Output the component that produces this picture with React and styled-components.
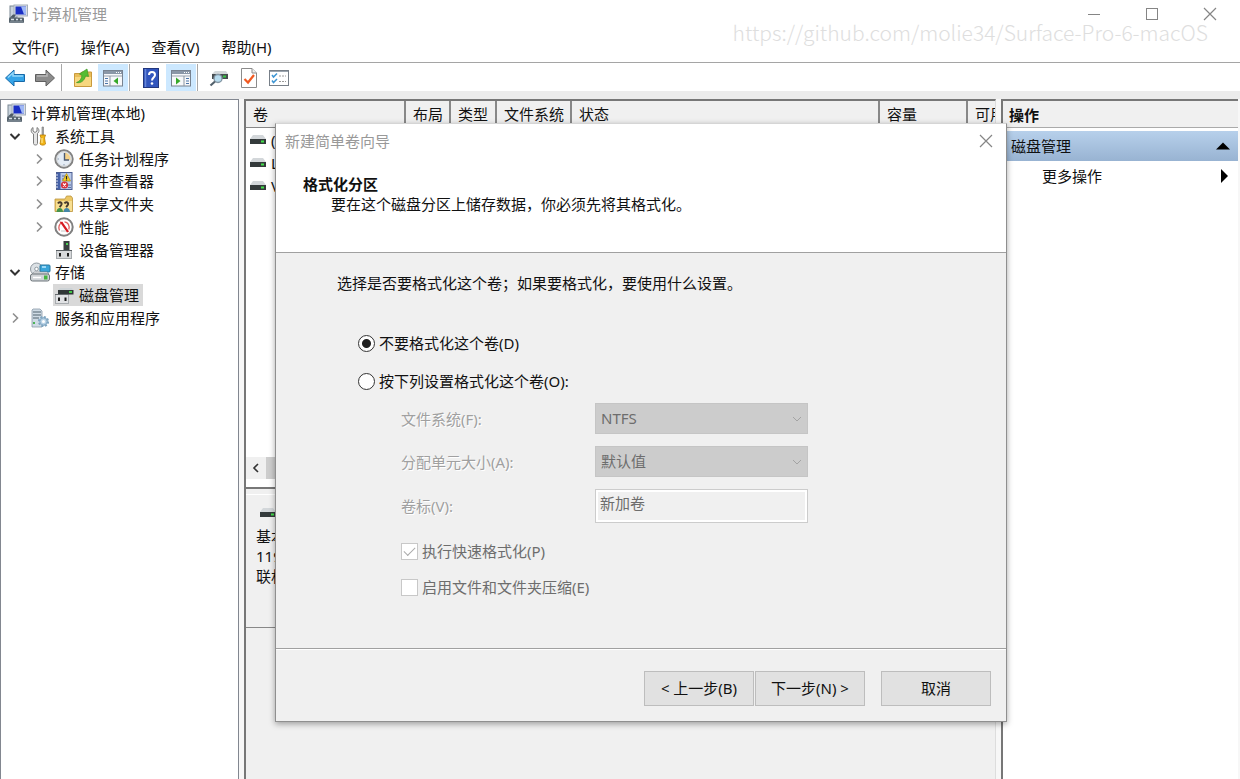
import { useState } from 'react';
import styled, { createGlobalStyle, css } from 'styled-components';

const GlobalStyle = createGlobalStyle`
    * {
        box-sizing: border-box;
    }

    body {
        margin: 0;
        overflow: hidden;
    }

    body, button, input, select {
        font-family: "Noto Sans", "Noto Sans CJK SC", sans-serif;
        font-size: 15px;
        line-height: 20px;
        color: #111;
    }
`;

/* ---------- Iconos ---------- */

const ComputerIcon = () => (
    <svg width="20" height="20" viewBox="0 0 20 20">
        <rect x="2" y="2" width="7" height="12" fill="#c9d3dc" stroke="#7b8894" />
        <rect x="6" y="1" width="13.5" height="11" fill="#d9dee6" stroke="#a3adba" />
        <rect x="7.500" y="2.500" width="10.500" height="8" fill="#1a2fc4" />
        <path d="M13 2.500H18V10.500H16Z" fill="#9fb8f5" />
        <path d="M2 13.500L5 10.500H8L6 14Z" fill="#4d5a66" />
        <rect x="1" y="13.500" width="15" height="5.500" rx="1" fill="#56636d" />
        <path d="M3 15.500H6M8 15.500H10M12 15.500H14" stroke="#d7e0e6" strokeWidth="1.500" />
        <path d="M2 18H15" stroke="#93a0aa" />
    </svg>
);

const ToolsIcon = () => (
    <svg width="20" height="20" viewBox="0 0 20 20">
        <path d="M3 1.500V5L5 6.500L7 5V1.500C9.500 3 9.500 6 7.500 7.500V17.500C7.500 19.500 3.500 19.500 3.500 17.500V8C.500 6.500 .500 3 3 1.500Z" fill="#e6e6e6" stroke="#7c7c7c" />
        <path d="M12 1H13.500V9H12Z" fill="#aaa" stroke="#777" strokeWidth=".600" />
        <path d="M10 9H15.500L14.500 12L15.500 18C14.500 19.500 11 19.500 10 18L11 12Z" fill="#f3b617" stroke="#b97d08" strokeWidth=".800" />
        <path d="M12 12V17" stroke="#fff1a8" />
    </svg>
);

const ClockIcon = () => (
    <svg width="20" height="20" viewBox="0 0 20 20">
        <circle cx="10" cy="10" r="8.700" fill="#e4ecf5" stroke="#828282" strokeWidth="2" />
        <circle cx="10" cy="10" r="7.200" fill="none" stroke="#d6d6d6" />
        <path d="M10.500 3.500A6.500 6.500 0 0 1 16.500 11H10.500Z" fill="#f4d28b" />
        <path d="M10.500 4V11H15" fill="none" stroke="#4c5a73" strokeWidth="1.400" />
        <path d="M3.500 10H5M10 15V16.500" stroke="#8f9db1" />
    </svg>
);

const EventIcon = () => (
    <svg width="20" height="20" viewBox="0 0 20 20">
        <rect x="2.500" y="1.500" width="15.500" height="17" fill="#b8c8e8" stroke="#4b5d91" />
        <rect x="3" y="2" width="3.500" height="16" fill="#4561a8" />
        <path d="M1.500 4H4M1.500 7H4M1.500 10H4M1.500 13H4M1.500 16H4" stroke="#dde4f2" strokeWidth="1.200" />
        <path d="M8 5H11M8 8H10M14 14H17M14 16.500H17" stroke="#5b6f9f" />
        <path d="M12.500 2.500L16.500 10H8.500Z" fill="#f7cf23" stroke="#b08c10" strokeWidth=".700" />
        <path d="M12.500 5V8M12.500 8.500V9.500" stroke="#222" strokeWidth="1.200" />
        <circle cx="10.500" cy="14" r="3.600" fill="#d8313b" />
        <path d="M9 12.500L12 15.500M12 12.500L9 15.500" stroke="#fff" strokeWidth="1.200" />
    </svg>
);

const SharedIcon = () => (
    <svg width="20" height="20" viewBox="0 0 20 20">
        <path d="M1 5H11L12.500 2H17L18.500 4V17.500H1Z" fill="#ecc765" stroke="#bd963e" strokeWidth=".800" />
        <path d="M2 7H18V17H2Z" fill="#f8df92" />
        <path d="M4 9.500C5 7.500 8 8 7.500 10.500C7 12 6 12.500 5.500 13" fill="none" stroke="#473a2c" strokeWidth="2" />
        <path d="M10.500 9.500C11.500 7.500 14.500 8 14 10.500C13.500 12 12.500 12.500 12 13" fill="none" stroke="#473a2c" strokeWidth="2" />
        <path d="M2.500 18C2.500 12.500 9 12.500 9 18Z" fill="#46934b" />
        <path d="M9.500 18C9.500 12.500 16 12.500 16 18Z" fill="#4386a8" />
    </svg>
);

const PerformanceIcon = () => (
    <svg width="20" height="20" viewBox="0 0 20 20">
        <circle cx="10" cy="10" r="8.700" fill="#fff" stroke="#808080" strokeWidth="2" />
        <path d="M5.500 13.500C4 10.500 5 6.500 8.500 5M10.500 4.800C14 5 16 9 14.800 12.500" fill="none" stroke="#e06060" strokeWidth="1.300" />
        <path d="M5.500 4.500L8.500 5L15 14.500L13 15.500Z" fill="#d71920" />
        <path d="M7 14H12" stroke="#c5c5c5" />
    </svg>
);

const DeviceIcon = () => (
    <svg width="20" height="20" viewBox="0 0 20 20">
        <rect x="9.500" y="1" width="6" height="10" fill="#393f3f" />
        <rect x="12" y="3" width="2" height="2" fill="#4ccf54" />
        <rect x="2.500" y="10.500" width="15" height="8" fill="#d7d9db" stroke="#a5a9ac" />
        <path d="M2 10.500H18" stroke="#595e62" />
        <rect x="5" y="13" width="2" height="3.500" fill="#1d1d1d" />
        <rect x="13" y="13" width="2" height="3.500" fill="#1d1d1d" />
    </svg>
);

const StorageIcon = () => (
    <svg width="22" height="20" viewBox="0 0 22 20">
        <circle cx="7.500" cy="7" r="6" fill="#dce1e5" stroke="#8f989f" />
        <circle cx="7.500" cy="7" r="1.800" fill="#fff" stroke="#929ca3" />
        <rect x="11" y="3" width="10" height="7" rx="1" fill="#3aa5d9" stroke="#27769f" />
        <path d="M13 5H17" stroke="#bdeaff" strokeWidth="1.500" />
        <path d="M3 12L5 10H18L20 12Z" fill="#eef0f1" stroke="#8d9499" strokeWidth=".700" />
        <rect x="1.500" y="12" width="19" height="7" rx="2" fill="#d0d4d7" stroke="#6d757a" />
        <rect x="15" y="13.500" width="3.500" height="4" fill="#44b43f" />
        <path d="M4 15.500H12" stroke="#fff" strokeWidth="1.500" />
    </svg>
);

const DiskToolIcon = () => (
    <svg width="20" height="20" viewBox="0 0 20 20">
        <path d="M4 5L6 3H18L19 5Z" fill="#cdd3d6" />
        <rect x="4" y="5" width="15.500" height="4.500" fill="#303636" />
        <rect x="15" y="6" width="3" height="2" fill="#43c948" />
        <rect x="1.500" y="9.500" width="13" height="9" fill="#e1e2e4" stroke="#a7abae" />
        <path d="M1 9.500H15" stroke="#656a6d" />
        <rect x="4" y="12.500" width="2" height="3.500" fill="#1d1d1d" />
        <rect x="10.500" y="12.500" width="2" height="3.500" fill="#1d1d1d" />
    </svg>
);

const ServicesIcon = () => (
    <svg width="20" height="20" viewBox="0 0 20 20">
        <path d="M3 1H10L12 3V19H2V2Z" fill="#cfdbe5" stroke="#8a9ba8" strokeWidth=".800" />
        <path d="M3 4H11M3 7H11M3 10H9" stroke="#51636f" strokeWidth="1.200" />
        <rect x="3" y="14" width="2" height="2" fill="#4cb456" />
        <circle cx="13.500" cy="13.500" r="4.500" fill="#aac6dc" stroke="#7fa5c0" strokeWidth="2.200" strokeDasharray="2 1.500" />
        <circle cx="13.500" cy="13.500" r="3.500" fill="#bad3e6" stroke="#7fa5c0" strokeWidth=".800" />
        <circle cx="13.500" cy="13.500" r="1.500" fill="#fff" />
    </svg>
);

const DriveIcon = () => (
    <svg width="18" height="12" viewBox="0 0 18 12">
        <path d="M1 5L4 1H14L17 5Z" fill="#d3d7da" />
        <rect x="1" y="5" width="16" height="5" fill="#343a3b" />
        <rect x="12" y="6.500" width="3" height="2" fill="#42e04a" />
    </svg>
);

const ArrowIcon = ({ forward }) => (
    <svg width="22" height="20" viewBox="0 0 22 20">
        {forward
            ? <path d="M20.500 10L12 2V6.500H1.500V13.500H12V18Z" fill="#8c8c8c" stroke="#5f5f5f" strokeLinejoin="round" />
            : <path d="M1.500 10L10 2V6.500H20.500V13.500H10V18Z" fill="#35a4e8" stroke="#1769a8" strokeLinejoin="round" />}
        <path d={forward ? 'M3 8H13V5' : 'M4 9.500L9 5V8H19'} fill="none" stroke={forward ? '#b8b8b8' : '#91d6fa'} strokeWidth="1.500" />
    </svg>
);

const FolderUpIcon = () => (
    <svg width="20" height="20" viewBox="0 0 20 20">
        <path d="M1.500 5.500H7L9 4H18.500V18.500H1.500Z" fill="#e9bd59" stroke="#c99a3d" />
        <path d="M2 9H18V18H2Z" fill="#f7d77f" />
        <path d="M3.500 14.500C7 13.500 8.500 10.500 9 7.500L6.500 6L14 1L15.500 8.500L12.500 8C11.500 12.500 8 15.500 3.500 14.500Z" fill="#57bd32" stroke="#3c9a25" strokeWidth=".700" />
    </svg>
);

const PaneIcon = ({ right }) => (
    <svg width="22" height="20" viewBox="0 0 22 20">
        <rect x="1.500" y="2.500" width="19" height="15.500" fill="#f7f8fa" stroke="#778290" />
        <rect x="2" y="3" width="18" height="3" fill="#8a97a7" />
        <path d="M14 4.500H15M16 4.500H17M18 4.500H19" stroke="#fff" />
        <path d="M2 8H20" stroke="#98a3b0" />
        {right ? (
            <>
                <path d="M14 8V18" stroke="#8b96a2" />
                <path d="M16 10.500H19M16 13H19M16 15.500H19" stroke="#4b75a9" strokeWidth="1.200" />
                <path d="M6 9.500L10.500 13L6 16.500Z" fill="#35a829" />
            </>
        ) : (
            <>
                <path d="M8 8V18" stroke="#8b96a2" />
                <path d="M3 10.500H6M3 13H6M3 15.500H6" stroke="#4b75a9" strokeWidth="1.200" />
                <path d="M16 9.500L11.500 13L16 16.500Z" fill="#35a829" />
            </>
        )}
    </svg>
);

const HelpIcon = () => (
    <svg width="18" height="22" viewBox="0 0 18 22">
        <rect x="1.500" y="1.500" width="15" height="19" fill="#3155bd" stroke="#22377e" />
        <path d="M3.500 2V20" stroke="#6886d7" strokeWidth="1.500" />
        <path d="M7 8C7 4 13 4 13 8C13 10.500 10 10.500 10 13.500" fill="none" stroke="#fff" strokeWidth="2" />
        <circle cx="10" cy="16.500" r="1.300" fill="#fff" />
    </svg>
);

const DiskSearchIcon = () => (
    <svg width="20" height="20" viewBox="0 0 20 20">
        <path d="M3 6L6 3H17L19 6Z" fill="#d3d8da" />
        <rect x="3" y="6" width="16" height="5" fill="#474d50" />
        <rect x="14" y="7.500" width="3" height="2" fill="#39c945" />
        <circle cx="9" cy="10.500" r="4" fill="#b7dcef" stroke="#8496a3" strokeWidth="1.400" />
        <path d="M6 13.500L1.500 17.500" stroke="#52616c" strokeWidth="2.200" />
    </svg>
);

const CheckDocIcon = () => (
    <svg width="18" height="22" viewBox="0 0 18 22">
        <path d="M1.500 1.500H12L16.500 6V20.500H1.500Z" fill="#fff" stroke="#8b8b8b" />
        <path d="M12 1.500V6H16.500" fill="#eee" stroke="#8b8b8b" />
        <path d="M4.500 12L8 15.500L14 8" fill="none" stroke="#f15a22" strokeWidth="2.200" />
    </svg>
);

const ChecklistIcon = () => (
    <svg width="22" height="18" viewBox="0 0 22 18">
        <rect x="1.500" y="1.500" width="19" height="15" fill="#fff" stroke="#777f88" />
        <path d="M2 2.500H20" stroke="#9ba5af" />
        <path d="M4 6L5.500 8L9 4.500M4 11.500L5.500 13.500L9 10" fill="none" stroke="#3d95d3" strokeWidth="1.500" />
        <path d="M11 7H13M14 7H16M17 7H18M11 12.500H13M14 12.500H16M17 12.500H18" stroke="#999" />
    </svg>
);

const CloseIcon = () => (
    <svg width="14" height="14" viewBox="0 0 14 14">
        <path d="M1 1L13 13M13 1L1 13" stroke="#858585" strokeWidth="1.200" />
    </svg>
);

const ChevronIcon = ({ open }) => (
    <svg width="12" height="12" viewBox="0 0 12 12">
        <path d={open ? 'M1.500 4L6 8.500L10.500 4' : 'M4 1.500L8.500 6L4 10.500'} fill="none" stroke={open ? '#333' : '#8f8f8f'} strokeWidth={open ? 2 : 1.600} />
    </svg>
);

const SelectArrow = () => (
    <svg width="10" height="6" viewBox="0 0 10 6">
        <path d="M1 1L5 5L9 1" fill="none" stroke="#a3a3a3" />
    </svg>
);

/* ---------- Datos ---------- */

const menus = ['文件(F)', '操作(A)', '查看(V)', '帮助(H)'];

const treeItems = [
    { id: 'root', name: '计算机管理(本地)', depth: 0, icon: <ComputerIcon /> },
    { id: 'tools', name: '系统工具', depth: 1, icon: <ToolsIcon />, expandable: true, open: true },
    { id: 'tasks', name: '任务计划程序', depth: 2, icon: <ClockIcon />, expandable: true },
    { id: 'events', name: '事件查看器', depth: 2, icon: <EventIcon />, expandable: true },
    { id: 'shared', name: '共享文件夹', depth: 2, icon: <SharedIcon />, expandable: true },
    { id: 'perf', name: '性能', depth: 2, icon: <PerformanceIcon />, expandable: true },
    { id: 'devices', name: '设备管理器', depth: 2, icon: <DeviceIcon /> },
    { id: 'storage', name: '存储', depth: 1, icon: <StorageIcon />, expandable: true, open: true },
    { id: 'disks', name: '磁盘管理', depth: 2, icon: <DiskToolIcon /> },
    { id: 'services', name: '服务和应用程序', depth: 1, icon: <ServicesIcon />, expandable: true },
];

const columns = [
    { name: '卷', width: 160 },
    { name: '布局', width: 45 },
    { name: '类型', width: 46 },
    { name: '文件系统', width: 75 },
    { name: '状态' },
    { name: '容量', width: 88 },
    { name: '可用', width: 27 },
];

const volumes = ['(', 'L', 'V'];

const App = () => {

    const [selected, setSelected] = useState('disks');
    const [format, setFormat] = useState('no');

    return (
        <Window>
            <GlobalStyle />
            <TitleBar>
                <ComputerIcon />
                <AppTitle>计算机管理</AppTitle>
                <WindowButton aria-label="最小化">
                    <svg width="14" height="14" viewBox="0 0 14 14"><path d="M1 7.500H13" stroke="#858585" /></svg>
                </WindowButton>
                <WindowButton aria-label="最大化">
                    <svg width="14" height="14" viewBox="0 0 14 14"><rect x="1.500" y="1.500" width="11" height="11" fill="none" stroke="#858585" /></svg>
                </WindowButton>
                <WindowButton aria-label="关闭"><CloseIcon /></WindowButton>
            </TitleBar>
            <Watermark>https://github.com/molie34/Surface-Pro-6-macOS</Watermark>

            <MenuBar>
                {menus.map(menu => <MenuButton key={menu}>{menu}</MenuButton>)}
            </MenuBar>

            <Toolbar>
                <ToolButton aria-label="后退"><ArrowIcon /></ToolButton>
                <ToolButton aria-label="前进"><ArrowIcon forward /></ToolButton>
                <ToolSeparator />
                <ToolButton aria-label="向上"><FolderUpIcon /></ToolButton>
                <ToolButton aria-label="控制台树" $active><PaneIcon /></ToolButton>
                <ToolSeparator />
                <ToolButton aria-label="帮助"><HelpIcon /></ToolButton>
                <ToolButton aria-label="操作窗格" $active><PaneIcon right /></ToolButton>
                <ToolSeparator />
                <ToolButton aria-label="扫描"><DiskSearchIcon /></ToolButton>
                <ToolButton aria-label="属性"><CheckDocIcon /></ToolButton>
                <ToolButton aria-label="列表"><ChecklistIcon /></ToolButton>
            </Toolbar>

            <Workspace>
                <TreePane>
                    <TreeList>
                        {treeItems.map(item => (
                            <TreeRow key={item.id} $depth={item.depth}>
                                {item.depth > 0 && (
                                    <Twisty>{item.expandable && <ChevronIcon open={item.open} />}</Twisty>
                                )}
                                <TreeLabel $selected={selected === item.id} onClick={() => setSelected(item.id)}>
                                    <TreeIcon>{item.icon}</TreeIcon>
                                    {item.name}
                                </TreeLabel>
                            </TreeRow>
                        ))}
                    </TreeList>
                </TreePane>

                <CenterPane>
                    <VolumeArea>
                        <VolumeTable>
                            <colgroup>
                                {columns.map(col => <col key={col.name} width={col.width} />)}
                            </colgroup>
                            <thead>
                                <tr>
                                    {columns.map(col => <ColumnHeader key={col.name}>{col.name}</ColumnHeader>)}
                                </tr>
                            </thead>
                            <tbody>
                                {volumes.map(volume => (
                                    <tr key={volume}>
                                        <VolumeCell colSpan={columns.length}>
                                            <VolumeName><DriveIcon />{volume}</VolumeName>
                                        </VolumeCell>
                                    </tr>
                                ))}
                            </tbody>
                        </VolumeTable>
                        <ScrollBar>
                            <ScrollButton aria-label="向左滚动">
                                <svg width="8" height="10" viewBox="0 0 8 10"><path d="M6 1L2 5L6 9" fill="none" stroke="#333" strokeWidth="1.600" /></svg>
                            </ScrollButton>
                            <ScrollThumb />
                        </ScrollBar>
                    </VolumeArea>
                    <DiskArea>
                        <DiskRow>
                            <DiskIconBox><DriveIcon /></DiskIconBox>
                            <div>基本</div>
                            <div>119</div>
                            <div>联机</div>
                        </DiskRow>
                    </DiskArea>
                </CenterPane>

                <ActionPane>
                    <ActionHeader>操作</ActionHeader>
                    <ActionGroup>
                        磁盘管理
                        <svg width="14" height="8" viewBox="0 0 14 8"><path d="M0 7.500L7 .500L14 7.500Z" fill="#000" /></svg>
                    </ActionGroup>
                    <ActionItem>
                        更多操作
                        <svg width="14" height="14" viewBox="0 0 14 14"><path d="M4 0L11 7L4 14Z" fill="#000" /></svg>
                    </ActionItem>
                </ActionPane>
            </Workspace>

            <Dialog role="dialog" aria-labelledby="wizard-title">
                <DialogTop>
                    <DialogTitleBar>
                        <span id="wizard-title">新建简单卷向导</span>
                        <DialogClose aria-label="关闭"><CloseIcon /></DialogClose>
                    </DialogTitleBar>
                    <StepTitle>格式化分区</StepTitle>
                    <StepText>要在这个磁盘分区上储存数据，你必须先将其格式化。</StepText>
                </DialogTop>

                <DialogBody>
                    <Intro>选择是否要格式化这个卷；如果要格式化，要使用什么设置。</Intro>
                    <RadioList>
                        <OptionLabel>
                            <Radio name="format" checked={format === 'no'} onChange={() => setFormat('no')} />
                            不要格式化这个卷(D)
                        </OptionLabel>
                        <OptionLabel>
                            <Radio name="format" checked={format === 'yes'} onChange={() => setFormat('yes')} />
                            按下列设置格式化这个卷(O):
                        </OptionLabel>
                    </RadioList>
                    <Fields>
                        <FieldLabel htmlFor="fs">文件系统(F):</FieldLabel>
                        <SelectBox>
                            <Select id="fs" disabled><option>NTFS</option></Select>
                            <SelectArrow />
                        </SelectBox>
                        <FieldLabel htmlFor="unit">分配单元大小(A):</FieldLabel>
                        <SelectBox>
                            <Select id="unit" disabled><option>默认值</option></Select>
                            <SelectArrow />
                        </SelectBox>
                        <FieldLabel htmlFor="label">卷标(V):</FieldLabel>
                        <TextInput id="label" defaultValue="新加卷" disabled />
                    </Fields>
                    <CheckList>
                        <OptionLabel $disabled>
                            <CheckBox defaultChecked disabled />
                            执行快速格式化(P)
                        </OptionLabel>
                        <OptionLabel $disabled>
                            <CheckBox disabled />
                            启用文件和文件夹压缩(E)
                        </OptionLabel>
                    </CheckList>
                </DialogBody>

                <DialogFooter>
                    <FooterButton>&lt; 上一步(B)</FooterButton>
                    <FooterButton>下一步(N) &gt;</FooterButton>
                    <FooterButton $apart>取消</FooterButton>
                </DialogFooter>
            </Dialog>
        </Window>
    )
}

export default App;


const plainButton = css`
    display: flex;
    align-items: center;
    justify-content: center;
    padding: 0;
    border: none;
    background: none;
`;

const Window = styled.div`
    position: relative;
    display: flex;
    flex-direction: column;
    height: 100vh;
    background-color: #fff;
    overflow: hidden;
`;

const TitleBar = styled.header`
    display: flex;
    align-items: center;
    height: 28px;
    padding: 0 1px 0 8px;
`;

const AppTitle = styled.span`
    flex: 1;
    margin-left: 4px;
    color: #999;
`;

const WindowButton = styled.button`
    ${plainButton}
    width: 58px;
    height: 28px;
`;

// Marca de agua sobre la barra de título
const Watermark = styled.div`
    position: absolute;
    top: 17px;
    right: 32px;
    font-family: "Noto Sans CJK SC", sans-serif;
    font-weight: 300;
    font-size: 21px;
    line-height: 30px;
    color: #dedede;
    pointer-events: none;
`;

const MenuBar = styled.nav`
    display: flex;
    align-items: center;
    gap: 22px;
    height: 35px;
    padding: 4px 12px 0;
    border-bottom: 1px solid #a5a5a5;
`;

const MenuButton = styled.button`
    ${plainButton}
`;

const Toolbar = styled.div`
    display: flex;
    height: 28px;
    padding-top: 1px;
`;

const ToolButton = styled.button`
    ${plainButton}
    width: 30px;
    background-color: ${props => props.$active ? '#cce8ff' : 'transparent'};
`;

const ToolSeparator = styled.div`
    width: 1px;
    margin: 0 6px 0 1px;
    background-color: #a8a8a8;
`;

const Workspace = styled.main`
    flex: 1;
    min-height: 0;
    display: grid;
    grid-template-columns: 239px 1fr 237px;
    column-gap: 5px;
    padding: 8px 2px 0 0;
    background: linear-gradient(#ececec 8px, #f7f7f7 8px);
`;

const TreePane = styled.section`
    padding-top: 2px;
    background-color: #fff;
    border: 1px solid #828790;
    border-bottom: none;
`;

const TreeList = styled.ul`
    display: grid;
    grid-template-rows: repeat(10, 1fr);
    height: 227px;
    margin: 0;
    padding: 0;
    list-style: none;
`;

const TreeRow = styled.li`
    display: flex;
    align-items: center;
    padding-left: ${props => [4, 6, 30][props.$depth]}px;
`;

const Twisty = styled.span`
    display: flex;
    align-items: center;
    justify-content: center;
    width: 16px;
    height: 16px;
    margin-right: 6px;
`;

const TreeLabel = styled.button`
    ${plainButton}
    gap: 4px;
    height: 22px;
    padding-right: 4px;
    white-space: nowrap;
    background-color: ${props => props.$selected ? '#d9d9d9' : 'transparent'};
`;

const TreeIcon = styled.span`
    display: flex;
    justify-content: center;
    width: 22px;
`;

const CenterPane = styled.section`
    display: flex;
    flex-direction: column;
    min-width: 0;
    background-color: #f0f0f0;
    border-top: 2px solid #777;
    border-left: 2px solid #777;
    border-right: 1px solid #ddd;
`;

const VolumeArea = styled.div`
    display: flex;
    flex-direction: column;
    height: 388px;
    padding-bottom: 8px;
    background-color: #fff;
    border-bottom: 2px solid #777;
`;

const VolumeTable = styled.table`
    width: 100%;
    table-layout: fixed;
    border-collapse: separate;
    border-spacing: 0;
`;

const ColumnHeader = styled.th`
    height: 27px;
    padding: 0 7px;
    overflow: hidden;
    font-weight: normal;
    text-align: left;
    white-space: nowrap;
    background-color: #f0f0f0;
    border-right: 2px solid #888;
    border-bottom: 1px solid #888;

    &:last-child {
        padding-right: 0;
        border-right: none;
    }
`;

const VolumeCell = styled.td`
    height: 23px;
    padding: 0 3px;
`;

const VolumeName = styled.div`
    display: flex;
    align-items: center;
    gap: 4px;
    line-height: 18px;
`;

const ScrollBar = styled.div`
    display: flex;
    height: 22px;
    margin-top: auto;
    background-color: #f0f0f0;
`;

const ScrollButton = styled.button`
    ${plainButton}
    width: 20px;
`;

const ScrollThumb = styled.div`
    width: 60%;
    background-color: #cdcdcd;
`;

const DiskArea = styled.div`
    flex: 1;
    padding-top: 5px;
`;

const DiskRow = styled.div`
    height: 134px;
    padding: 12px 10px;
    border-top: 1px solid #fff;
    border-bottom: 1px solid #888;
`;

const DiskIconBox = styled.div`
    display: flex;
    height: 19px;
    padding-left: 3px;
`;

const ActionPane = styled.aside`
    background-color: #fff;
    border-top: 2px solid #777;
    border-left: 2px solid #777;
`;

const ActionHeader = styled.h2`
    height: 27px;
    margin: 0 0 3px;
    padding: 4px 6px;
    font-size: 15px;
    line-height: 20px;
    background-color: #f0f0f0;
    border-bottom: 1px solid #aaa;
`;

const ActionGroup = styled.div`
    display: flex;
    align-items: center;
    justify-content: space-between;
    height: 30px;
    padding: 0 8px;
    background: linear-gradient(#b7d0eb, #98b3d2);
`;

const ActionItem = styled.div`
    display: flex;
    align-items: center;
    justify-content: space-between;
    height: 30px;
    padding: 0 7px 0 39px;
`;

const Dialog = styled.div`
    position: absolute;
    top: 123px;
    left: 275px;
    width: 732px;
    color: #111;
    background-color: #f0f0f0;
    border: 1px solid #8f8f8f;
    border-top-color: #d5d5d5;
    box-shadow: 0 2px 6px rgba(0, 0, 0, 0.35);
`;

const DialogTop = styled.div`
    height: 128px;
    background-color: #fff;
`;

const DialogTitleBar = styled.div`
    display: flex;
    align-items: center;
    justify-content: space-between;
    height: 34px;
    padding-left: 9px;
    color: #999;
`;

const DialogClose = styled.button`
    ${plainButton}
    width: 40px;
    height: 34px;
`;

const StepTitle = styled.h1`
    margin: 16px 0 0 27px;
    font-size: 15px;
    line-height: 20px;
`;

const StepText = styled.p`
    margin: 0 0 0 55px;
`;

const DialogBody = styled.div`
    height: 396px;
    padding: 20px 24px 0 61px;
    border-top: 1px solid #a0a0a0;
`;

const Intro = styled.p`
    margin: 0;
`;

const RadioList = styled.div`
    display: flex;
    flex-direction: column;
    gap: 18px;
    margin: 40px 0 0 21px;
`;

const OptionLabel = styled.label`
    display: flex;
    align-items: center;
    gap: 4px;
    width: max-content;
    color: ${props => props.$disabled ? '#6d6d6d' : '#111'};
`;

const Radio = styled.input.attrs({ type: 'radio' })`
    appearance: none;
    width: 17px;
    height: 17px;
    margin: 0;
    border: 1px solid #333;
    border-radius: 50%;
    background-color: #fff;

    &:checked {
        background-image: radial-gradient(circle, #222 4px, transparent 5px);
    }
`;

const Fields = styled.div`
    display: grid;
    grid-template-columns: 194px 213px;
    row-gap: 12px;
    align-items: center;
    margin: 12px 0 0 64px;
`;

const FieldLabel = styled.label`
    color: #a0a0a0;
    text-shadow: 1px 1px 0 #fff;
`;

const SelectBox = styled.div`
    position: relative;

    svg {
        position: absolute;
        right: 6px;
        top: 13px;
    }
`;

const Select = styled.select`
    appearance: none;
    display: block;
    width: 100%;
    height: 31px;
    padding: 0 5px 2px;
    border: 1px solid #c5c5c5;
    border-radius: 0;
    background-color: #ccc;
    color: #6d6d6d;
    opacity: 1;
`;

const TextInput = styled.input.attrs({ type: 'text' })`
    width: 100%;
    height: 34px;
    padding: 0 4px 8px;
    border: 1px solid #ccc;
    outline: 2px solid #fff;
    outline-offset: -3px;
    background-color: #f0f0f0;
    color: #6d6d6d;
`;

const CheckList = styled.div`
    display: flex;
    flex-direction: column;
    gap: 16px;
    margin: 18px 0 0 64px;
`;

const CheckBox = styled.input.attrs({ type: 'checkbox' })`
    appearance: none;
    display: grid;
    place-items: center;
    width: 17px;
    height: 17px;
    margin: 0;
    border: 1px solid #c8c8c8;
    background-color: #fff;

    &:checked::before {
        content: "";
        width: 10px;
        height: 5px;
        margin-bottom: 3px;
        border-left: 1px solid #aaa;
        border-bottom: 1px solid #aaa;
        transform: rotate(-45deg);
    }
`;

const DialogFooter = styled.div`
    display: flex;
    justify-content: flex-end;
    gap: 1px;
    height: 73px;
    padding: 22px 15px 0 0;
    border-top: 1px solid #a0a0a0;
    box-shadow: inset 0 1px 0 #fff;
`;

const FooterButton = styled.button`
    width: 110px;
    height: 35px;
    margin-left: ${props => props.$apart ? 15 : 0}px;
    padding: 0 0 2px;
    border: 1px solid #bdbdbd;
    background-color: #e1e1e1;
`;
